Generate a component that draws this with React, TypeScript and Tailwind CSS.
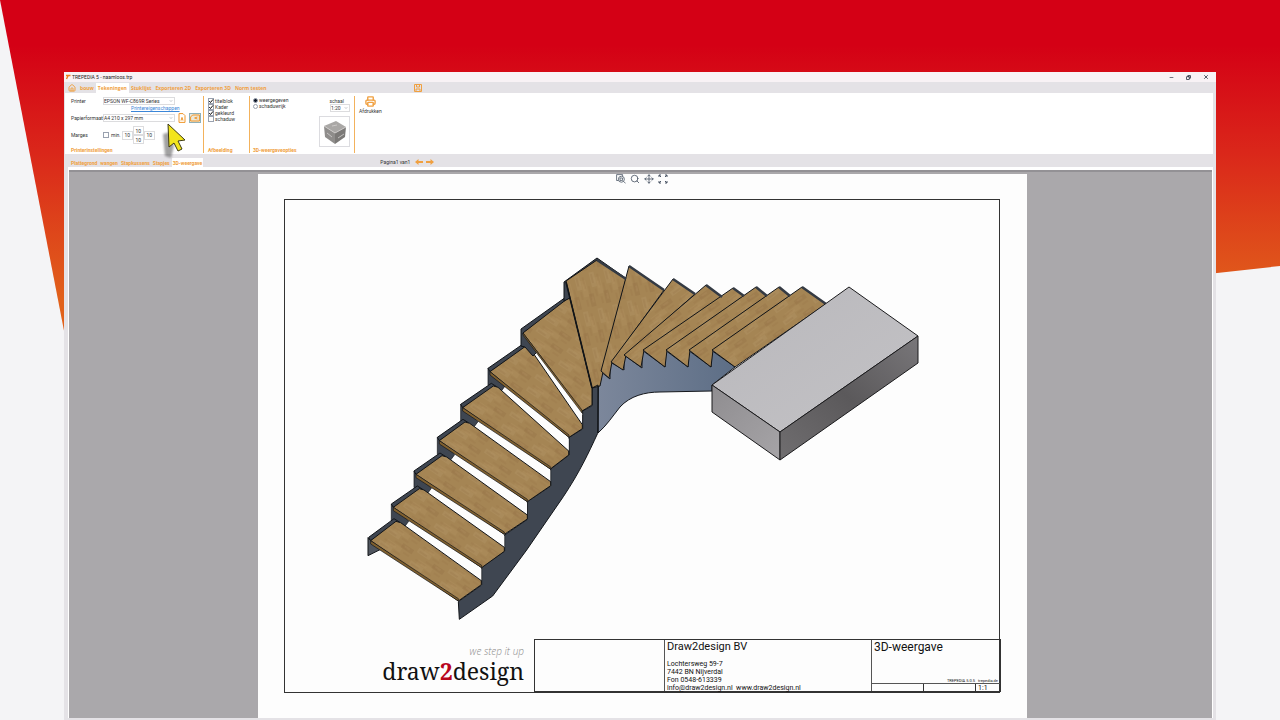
import { ChevronDown, Copy, House, Minus, Move, Printer, Search, X } from 'lucide-react';
import { ReactNode, useState } from 'react';

const mainTabs = ['bouw', 'Tekeningen', 'Stuklijst', 'Exporteren 2D', 'Exporteren 3D', 'Norm testen'];
const drawingTabs = ['Plattegrond', 'wangen', 'Stapkussens', 'Stapjes', '3D-weergave'];

// lower flight, drawn on a grid three times finer than the sheet
const lowerSteps = [
  { l: [62, 662], p: [138, 604], r: [394, 794], b: [325, 843], gap: '178,607 168,621 394,781 394,746' },
  { l: [130, 562], p: [208, 506], r: [463, 694], b: [395, 743], gap: '248,509 238,523 463,682 463,648' },
  { l: [198, 463], p: [276, 407], r: [532, 597], b: [463, 643], gap: '315,409 306,424 531,583 531,549' },
  { l: [268, 362], p: [345, 306], r: [602, 497], b: [532, 545], gap: '384,309 374,324 601,484 601,451' },
  { l: [338, 263], p: [430, 198], r: [656, 405], b: [601, 447], gap: '466,206 457,220 656,391 656,357' },
  { l: [420, 155], p: [525, 80], r: [697, 326], b: [657, 352], gap: '560,99 550,110 696,303 696,283' },
];

const upperTreads = [
  '566,281 597,260 626,279 603,372 600,386 592,388',
  '629,266 664,290 612,362 609,378 601,371',
  '673,279 695,294 626,355 623,370 611,362',
  '706,285 722,297 644,350 641,367 624,355',
  '733,288 744,296 667,350 665,367 643,350',
  '756,287 767,296 690,350 688,367 666,350',
  '779,287 790,296 713,350 711,367 689,350',
  '802,287 826,304 735,367 712,350',
];

const Wood = ({ id, transform }: { id: string; transform: string }) => (
  <pattern id={id} width="37" height="15" patternUnits="userSpaceOnUse" patternTransform={transform}>
    <rect width="37" height="15" fill="#a58554" />
    <rect width="15" height="5" fill="#aa8b5b" />
    <rect x="21" y="5" width="13" height="5" fill="#9f7e4f" />
    <rect x="6" y="10" width="17" height="5" fill="#a98958" />
    <path d="M2 3h9M17 2h8M13 8h14M3 12h12M26 13h7" stroke="#967548" strokeWidth=".5" />
    <path d="M6 1h5M24 7h6M10 13h7" stroke="#b59565" strokeWidth=".5" />
  </pattern>
);

const Staircase = () => (
  <svg className="block w-full" viewBox="285 200 714 437" role="img" aria-label="3D-weergave trap">
    <defs>
      <Wood id="wood" transform="rotate(34)" />
      <Wood id="woodFine" transform="scale(3) rotate(34)" />
      <Wood id="woodUp" transform="rotate(-36)" />
      <Wood id="woodTurn" transform="rotate(76)" />
      <linearGradient id="steel" x1="0" y1="0" x2="1" y2="0">
        <stop offset="0" stopColor="#7c879b" />
        <stop offset="1" stopColor="#5d6e86" />
      </linearGradient>
      <linearGradient id="slabTop" x1="0" y1="0" x2="1" y2="1">
        <stop offset="0" stopColor="#b9b8bc" />
        <stop offset="1" stopColor="#c3c2c5" />
      </linearGradient>
      <linearGradient id="slabSide" x1="0" y1="1" x2="1" y2="0">
        <stop offset="0" stopColor="#706e70" />
        <stop offset=".5" stopColor="#5b595b" />
        <stop offset="1" stopColor="#79777a" />
      </linearGradient>
      <linearGradient id="slabFront" x1="0" y1="0" x2="1" y2="1">
        <stop offset="0" stopColor="#8f8d90" />
        <stop offset="1" stopColor="#a6a4a7" />
      </linearGradient>
    </defs>

    {/* inner stringer */}
    <path
      d="M598 386 600 371 610 379V362L624 370V355L642 368V350L665 367V350L688 367V350L711 367V350L735 367 712 385V391L660 392C645 392 630 396 620 407 612 417 607 425 598 433Z"
      fill="url(#steel)"
      stroke="#14171c"
    />

    {/* lower flight */}
    <g transform="translate(350 320) scale(.33333)" strokeLinejoin="round" stroke="#111418" strokeWidth="3">
      <path
        d="M325 845 395 795V742L464 693V645L532 598V545L602 498V447L657 405V352L698 327V273L727 257V200L745 196 743 340C715 400 690 455 640 530L530 690 428 828 328 898Z"
        fill="#3f4651"
      />
      <path d="M54 653V707L92 688 62 662Z" fill="#50565f" />
      {lowerSteps.slice(1).map(({ l }) => (
        <path key={l[1]} d={`M${l[0] - 6} ${l[1] - 10}v50l10 10 30 8 12-16-44-42Z`} fill="#3f4651" strokeWidth="2" />
      ))}
      {lowerSteps.map(({ gap }) => (
        <polygon key={gap} points={gap} fill="#fdfdfd" stroke="none" />
      ))}
      {lowerSteps.map(({ l, p, r, b }) => (
        <g key={l[0]}>
          <path
            d={`M${l[0] - 6} ${l[1] - 10}L${p[0] - 6} ${p[1] - 8} ${p[0] + 10} ${p[1] + 2} ${l[0]} ${l[1]}Z`}
            fill="#3f4651"
          />
          <polygon points={`${l} ${p} ${p[0] + 14},${p[1] + 4} ${r[0]},${r[1] - 12} ${r} ${b}`} fill="url(#woodFine)" />
          <path d={`M${l[0]} ${l[1]}v10L${b[0]} ${b[1]}v-7Z`} fill="#80602f" strokeWidth="2" />
        </g>
      ))}
    </g>

    {/* seventh tread and its plate */}
    <g stroke="#111418" strokeLinejoin="round">
      <path d="M521 329 566 297 568 300 523 333 537 352 533 356 525 347 521 346Z" fill="#3f4651" />
      <path d="M523 333 567 299 570 298 592 388V405L582 411Z" fill="url(#wood)" />
      <path d="M523 333V335L582 413V410Z" fill="#80602f" strokeWidth=".6" />
      <path d="M564 282 597 258 627 279 625 282 597 261 567 283 570 298 564 301Z" fill="#3f4651" />
    </g>

    {/* winders and upper flight */}
    <g stroke="#111418" strokeLinejoin="round">
      {upperTreads.map((points, index) => (
        <polygon key={points} points={points} fill={index < 2 ? 'url(#woodTurn)' : 'url(#woodUp)'} />
      ))}
      <path d="M566 282 592 388" strokeWidth="1.6" />
      <path
        d="M597 260 626 279M629 266 664 290M673 279 695 294M706 285 722 297M733 288 744 296M756 287 767 296M779 287 790 296M802 287 826 304"
        stroke="#343a43"
        strokeWidth="2.5"
      />
      <path d="M592 388 598 385V433" fill="none" />
    </g>

    {/* floor slab */}
    <g stroke="#1b1b1d" strokeLinejoin="round">
      <polygon points="849,287 918,336 780,432 712,385" fill="url(#slabTop)" />
      <polygon points="712,385 780,432 780,460 712,412" fill="url(#slabFront)" />
      <polygon points="780,432 918,336 918,363 780,460" fill="url(#slabSide)" />
    </g>
  </svg>
);

const Field = ({ id, label, children }: { id: string; label: string; children: ReactNode }) => (
  <div className="flex h-2 items-center">
    <label htmlFor={id} className="w-8 shrink-0">
      {label}
    </label>
    {children}
  </div>
);

const Dropdown = ({ id, value, className }: { id: string; value: string; className: string }) => (
  <span className={`relative flex items-center border border-[#dcdcde] bg-white ${className}`}>
    <select id={id} className="w-full appearance-none bg-transparent outline-none">
      <option>{value}</option>
    </select>
    <ChevronDown className="pointer-events-none absolute right-px size-1 text-gray-600" />
  </span>
);

const Margin = ({ label }: { label: string }) => (
  <input
    aria-label={label}
    defaultValue="10"
    className="h-[9px] w-[11px] border border-[#dcdcde] bg-white text-center outline-none"
  />
);

const Check = ({ label, checked }: { label: string; checked: boolean }) => (
  <label className="flex h-[6px] items-center gap-px">
    <span className="relative flex size-[6px]">
      <input type="checkbox" defaultChecked={checked} className="peer size-[6px] appearance-none border border-gray-400 bg-white" />
      <svg viewBox="0 0 6 6" className="pointer-events-none absolute inset-0 hidden peer-checked:block">
        <path d="M1.2 3 2.5 4.5 5 1.4" fill="none" stroke="#111" />
      </svg>
    </span>
    {label}
  </label>
);

const Group = ({ title, className, children }: { title?: string; className: string; children: ReactNode }) => (
  <section className={`mt-[3px] mb-px flex shrink-0 flex-col justify-between ${className}`}>
    {children}
    {title && <h2 className="leading-[6px] font-bold text-[#f0a040]">{title}</h2>}
  </section>
);

const Ribbon = () => (
  <div className="mr-[3px] ml-px flex h-[61px] shrink-0 bg-white">
    <Group title="Printerinstellingen" className="w-[139px] border-r border-[#f3b25c] pl-[6px]">
      <div className="flex flex-col pt-px">
        <Field id="printer" label="Printer">
          <Dropdown id="printer" value="EPSON WF-C869R Series" className="h-2 w-[72px]" />
        </Field>
        <a href="#eigenschappen" className="ml-[60px] leading-[6px] text-[#3b86d8] underline">
          Printereigenschappen
        </a>
        <div className="mt-[2px] flex items-center gap-[3px]">
          <Field id="papier" label="Papierformaat">
            <Dropdown id="papier" value="A4 210 x 297 mm" className="h-2 w-[72px]" />
          </Field>
          <button aria-label="Staand" className="text-[#f0972b]">
            <svg viewBox="0 0 8 10" className="h-[10px] w-2" fill="none" stroke="currentColor">
              <path d="M1 .6h4l2 2v6.800H1ZM3 7.600 4 4.400l1 3.200" />
            </svg>
          </button>
          <button aria-label="Liggend" className="border border-[#8fb0b8] bg-[#ece8da] text-[#f0972b]">
            <svg viewBox="0 0 10 8" className="h-2 w-[10px]" fill="none" stroke="currentColor">
              <path d="M.6 7V3l2-2h6.800v6ZM7.400 3 4.600 4l2.800 1" />
            </svg>
          </button>
        </div>
        <div className="mt-[3px] flex items-center">
          <span className="w-8">Marges</span>
          <label className="flex items-center gap-[2px]">
            <input type="checkbox" className="size-[6px] appearance-none border border-gray-400 bg-white" />
            min.
          </label>
          <div className="ml-px flex items-center">
            <Margin label="Marge links" />
            <div className="flex flex-col">
              <Margin label="Marge boven" />
              <Margin label="Marge onder" />
            </div>
            <Margin label="Marge rechts" />
          </div>
        </div>
      </div>
    </Group>
    <Group title="Afbeelding" className="w-[46px] border-r border-[#f3b25c] pl-1">
      <div className="flex flex-col pt-[2px]">
        <Check label="titelblok" checked />
        <Check label="Kader" checked />
        <Check label="gekleurd" checked />
        <Check label="schaduw" checked={false} />
      </div>
    </Group>
    <Group title="3D-weergaveopties" className="w-[105px] border-r border-[#f3b25c] pr-1 pl-[3px]">
      <div className="flex justify-between">
        <div className="flex flex-col pt-px">
          {['weergegeven', 'schaduwrijk'].map((mode, index) => (
            <label key={mode} className="flex h-[6px] items-center gap-px">
              <input
                type="radio"
                name="mode"
                defaultChecked={index === 0}
                className="size-[5px] appearance-none rounded-full border border-gray-400 bg-white checked:bg-gray-900"
              />
              {mode}
            </label>
          ))}
        </div>
        <div className="flex flex-col items-end pt-[2px]">
          <label htmlFor="schaal" className="mr-[6px] leading-[6px]">
            schaal
          </label>
          <Dropdown id="schaal" value="1:20" className="h-2 w-5" />
          <button aria-label="Aanzicht" className="mt-1 flex size-[31px] items-center justify-center border border-[#dcdce0]">
            <svg viewBox="0 0 24 26" className="h-[26px] w-6">
              <path d="M1 7 13 2l10 6-11 6Z" fill="#aaa8a6" />
              <path d="M1 7 12 14v11L2 18Z" fill="#8f8d8b" />
              <path d="m12 14 11-6-1 10-10 7Z" fill="#7b7977" />
              <path d="m9 7 5-1M4 14l5 4M15 19l6-4M12 14l11-6M1 7l11 7" fill="none" stroke="#d3d1cf" strokeWidth=".8" />
            </svg>
          </button>
        </div>
      </div>
    </Group>
    <Group className="pl-1">
      <button className="flex flex-col items-center gap-px">
        <Printer className="size-[11px] text-[#f0a040]" strokeWidth={3} />
        <span className="leading-[6px]">Afdrukken</span>
      </button>
    </Group>
  </div>
);

const TitleBlock = () => (
  <div className="-mr-[2px] flex h-[53px] w-[467px] shrink-0 border border-[#333] text-[#111]">
    <div className="w-[130px] border-r border-[#555]" />
    <div className="flex flex-1 flex-col pl-[2px]">
      <span className="text-[11px] leading-[14px]">Draw2design BV</span>
      <address className="mt-[6px] flex flex-col text-[7px] leading-2 not-italic">
        <span>Lochtersweg 59-7</span>
        <span>7442 BN Nijverdal</span>
        <span>Fon 0548-613339</span>
        <span className="whitespace-pre">info@draw2design.nl  www.draw2design.nl</span>
      </address>
    </div>
    <div className="flex w-[129px] flex-col border-l border-[#555]">
      <span className="pl-[2px] text-[12px] leading-[14px]">3D-weergave</span>
      <span className="mt-auto pr-[2px] text-right text-[4px] leading-[5px] whitespace-pre">TREPEDIA 5.0.5   trepedia.de</span>
      <div className="flex h-2 border-t border-[#555] text-[7px] leading-2">
        <span className="w-[52px] border-r border-[#333]" />
        <span className="w-[52px] border-r border-[#333]" />
        <span className="pl-[2px]">1:1</span>
      </div>
    </div>
  </div>
);

const Sheet = () => (
  <div className="ml-1 flex w-[769px] max-w-full flex-col bg-[#fdfdfd] pr-[27px] pb-[25px] pl-[26px]">
    <div className="flex h-[25px] shrink-0 items-start justify-center gap-1 text-gray-600">
      <button aria-label="Venster vergroten">
        <svg viewBox="0 0 10 10" className="size-[10px]" fill="none" stroke="currentColor" strokeWidth=".8">
          <path d="M2.500 6.500H.6V.6h6v1.500" />
          <circle cx="5.400" cy="5.200" r="3" />
          <path d="M4 4h2.600v2.400H4ZM7.600 7.400l2 2" />
        </svg>
      </button>
      <button aria-label="Zoomen">
        <Search className="size-[10px]" strokeWidth={2} />
      </button>
      <button aria-label="Verschuiven">
        <Move className="size-[10px]" strokeWidth={2} />
      </button>
      <button aria-label="Passend">
        <svg viewBox="0 0 10 10" className="size-[10px]" fill="none" stroke="currentColor">
          <path d="M1 3V1h2M1 1l2 2M7 1h2v2M9 1 7 3M1 7v2h2M1 9l2-2M9 7v2H7M9 9 7 7" />
        </svg>
      </button>
    </div>
    <div className="flex flex-1 flex-col justify-between border border-[#333]">
      <Staircase />
      <div className="flex justify-end gap-[10px]">
        <div className="flex flex-col items-end pt-[6px]">
          <span className="font-['Open_Sans',sans-serif] text-[10px] leading-3 font-light text-[#888] italic">we step it up</span>
          <span className="font-['Noto_Serif','Liberation_Serif',serif] text-[23px] leading-7 text-[#111]">
            draw<b className="text-[#b8061c]">2</b>design
          </span>
        </div>
        <TitleBlock />
      </div>
    </div>
  </div>
);

export default function App() {
  const [tab, setTab] = useState('Tekeningen');
  const [drawing, setDrawing] = useState('3D-weergave');

  return (
    <div className="relative flex min-h-screen flex-col bg-[#f4f4f6] px-16 pt-[72px] font-['Roboto','Noto_Sans',sans-serif] text-[5px] leading-2 text-[#333]">
      <svg className="absolute inset-0 h-full w-full" viewBox="0 0 1280 720" preserveAspectRatio="none" aria-hidden="true">
        <defs>
          <linearGradient id="backdrop" gradientUnits="userSpaceOnUse" x1="0" y1="0" x2="0" y2="300">
            <stop offset=".15" stopColor="#d40015" />
            <stop offset=".5" stopColor="#da261a" />
            <stop offset="1" stopColor="#e1611b" />
          </linearGradient>
        </defs>
        <path d="M0 0H1280V266L77 398Z" fill="url(#backdrop)" />
      </svg>

      <main className="relative flex flex-1 flex-col bg-[#e4e2e6]">
        <header className="flex h-[10px] shrink-0 items-center bg-[#f8f2f5] pr-[7px] pl-px">
          <svg viewBox="0 0 6 6" className="mr-px size-[6px]">
            <path d="M1 1.500h4.500M3.200 1.500 1.500 5" stroke="#ef7d1a" strokeWidth="1.400" />
          </svg>
          <h1 className="text-[#222]">TREPEDIA 5 - naamloos.trp</h1>
          <div className="ml-auto flex gap-3 text-gray-800">
            <button aria-label="Minimaliseren">
              <Minus className="size-[5px]" strokeWidth={3} />
            </button>
            <button aria-label="Herstellen">
              <Copy className="size-[5px] -scale-x-100" strokeWidth={4} />
            </button>
            <button aria-label="Sluiten">
              <X className="size-[6px]" strokeWidth={3} />
            </button>
          </div>
        </header>

        <nav className="flex h-[11px] shrink-0 items-end pl-1 font-['Open_Sans',sans-serif] font-bold text-[#f0a040]">
          <a href="#start" aria-label="Start" className="mr-[2px] mb-px">
            <House className="size-2" strokeWidth={3} />
          </a>
          {mainTabs.map((name) => (
            <button key={name} onClick={() => setTab(name)} className={tab === name ? 'h-[10px] bg-white px-[2px]' : 'h-[10px] px-[2px]'}>
              {name}
            </button>
          ))}
          <button aria-label="Opslaan" className="mb-px ml-[145px]">
            <svg viewBox="0 0 8 8" className="size-2" fill="none" stroke="currentColor">
              <path d="M.5.5h7v7h-7ZM2.500.5v2.500h3V.5M2 7.500V5h4v2.500" />
            </svg>
          </button>
        </nav>

        <Ribbon />

        <nav className="flex h-[13px] shrink-0 items-end gap-px pl-[6px] font-bold text-[#f0a040]">
          {drawingTabs.map((name) => (
            <button key={name} onClick={() => setDrawing(name)} className={drawing === name ? 'h-[9px] bg-white px-px' : 'h-[9px] px-px'}>
              {name}
            </button>
          ))}
          <div className="mb-px ml-[176px] flex items-center gap-[3px]">
            <span className="mr-[2px] font-normal text-[#333]">Pagina1 van1</span>
            <button aria-label="Vorige pagina">
              <svg viewBox="0 0 8 6" className="h-[6px] w-2" fill="currentColor">
                <path d="M0 3 3.500 0v2H8v2H3.500v2Z" />
              </svg>
            </button>
            <button aria-label="Volgende pagina">
              <svg viewBox="0 0 8 6" className="h-[6px] w-2" fill="currentColor">
                <path d="M8 3 4.500 0v2H0v2h4.500v2Z" />
              </svg>
            </button>
          </div>
        </nav>

        <div className="mr-[3px] mb-[2px] ml-1 flex flex-1 flex-col border-x border-white bg-white pt-[3px]">
          <div className="flex flex-1 justify-center border-t-2 border-[#939195] bg-[#aaa8ab] pt-[2px]">
            <Sheet />
          </div>
        </div>
      </main>

      <svg viewBox="0 0 28 38" className="pointer-events-none absolute top-[122px] left-[160px] h-[38px] w-7" aria-hidden="true">
        <path d="M3 12 10 10 14 24 11 36 5 34Z" fill="#555" opacity=".55" className="blur-[1px]" />
        <path d="M8 2 25 18 18 19 22 27 18 29 14 21 9 25Z" fill="#f2e51c" stroke="#3c3a14" />
      </svg>
    </div>
  );
}
